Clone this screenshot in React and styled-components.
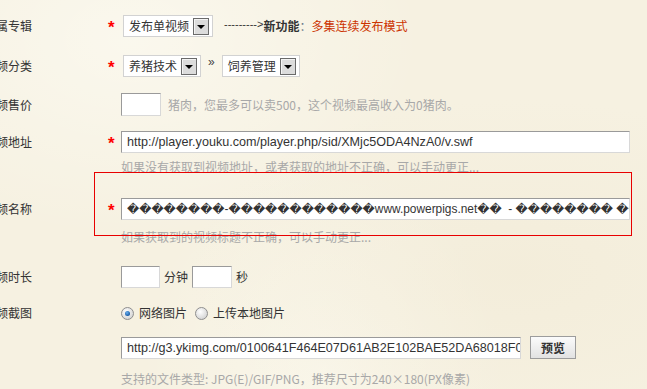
import React from "react";
import styled, { createGlobalStyle } from "styled-components";

const Global = createGlobalStyle`
  html, body { margin: 0; padding: 0; background: #f6f1e1; }
  body { font-family: "Noto Sans CJK SC", "Liberation Sans", sans-serif; }
  * { box-sizing: border-box; }
`;

const Page = styled.div`
  position: relative;
  width: 647px;
  height: 389px;
  overflow: hidden;
  background:
    radial-gradient(ellipse at 20% 10%, rgba(255,255,250,0.5), transparent 40%),
    radial-gradient(ellipse at 80% 70%, rgba(240,232,210,0.45), transparent 45%),
    radial-gradient(ellipse at 50% 95%, rgba(255,255,248,0.4), transparent 40%),
    #f6f1e1;
  color: #333;
  font-size: 12px;
`;

const Form = styled.div`
  display: flex;
  flex-direction: column;
  margin-left: -16px;
  padding-top: 15px;
`;

const Row = styled.div`
  display: grid;
  grid-template-columns: 124px 13px 1fr;
  align-items: center;
  margin-top: ${(p) => p.$top || 0}px;
  min-height: ${(p) => p.$h || 14}px;
`;

const Label = styled.div`
  font-size: 12px;
  line-height: 14px;
  color: #333;
  white-space: nowrap;
`;

const Star = styled.span`
  color: #ff0000;
  font-family: "Liberation Sans", sans-serif;
  font-weight: bold;
  font-size: 17px;
  line-height: 14px;
  padding-top: 3px;
  padding-left: 0;
`;

const Field = styled.div`
  display: flex;
  align-items: center;
  white-space: nowrap;
  line-height: 14px;
`;

const Select = styled.div`
  display: flex;
  align-items: center;
  height: 22px;
  margin-left: ${(p) => p.$ml || 0}px;
  padding: 0 3px 0 5px;
  background: #fff;
  border: 1px solid #d2d2d2;
  font-size: 12px;
  color: #333;
  gap: 4px;
`;

const ArrowBtn = styled.span`
  display: flex;
  align-items: center;
  justify-content: center;
  width: 16px;
  height: 17px;
  border: 1px solid #6a6a6a;
  background: #dcdcdc;
  box-shadow: inset 1px 1px 0 #f4f4f4;
`;

const Tri = styled.span`
  width: 0;
  height: 0;
  border-left: 4px solid transparent;
  border-right: 4px solid transparent;
  border-top: 4px solid #000;
  margin-top: 2px;
`;

const Arrow = styled.span`
  margin-left: 11px;
  font-family: "Liberation Sans", sans-serif;
  font-size: 11px;
  color: #333;
  position: relative;
  top: -2px;
`;

const Strong = styled.span`
  font-weight: bold;
  color: #333;
`;

const Colon = styled.span`
  color: #6a7a8a;
`;

const Red = styled.span`
  color: #cc3300;
`;

const Chevron = styled.span`
  font-family: "Liberation Sans", sans-serif;
  font-size: 12px;
  color: #444;
  margin: 0 7px 0 7px;
  position: relative;
  top: -4px;
`;

const TextInput = styled.input`
  width: ${(p) => p.$w}px;
  height: ${(p) => p.$h || 22}px;
  margin: 0;
  padding: 0 0 0 5px;
  background: #fff;
  border: 1px solid;
  border-color: #9a9a9a #d8d8d8 #d8d8d8 #9a9a9a;
  font-family: "Liberation Sans", "DejaVu Sans", sans-serif;
  font-size: ${(p) => p.$fs || 12.6}px;
  color: #333;
  outline: none;
`;

const Hint = styled.span`
  color: #a8a8a8;
  font-size: 12px;
  margin-left: ${(p) => p.$ml || 0}px;
`;

const Unit = styled.span`
  margin: 0 ${(p) => p.$mr || 4}px 0 4px;
  color: #333;
`;

const Radio = styled.span`
  position: relative;
  width: 13px;
  height: 13px;
  border-radius: 50%;
  border: 1px solid #8e8e8e;
  background: radial-gradient(circle at 40% 35%, #ffffff, #d6d6d6 75%);
  margin-left: ${(p) => p.$ml || 0}px;
  flex: none;
  &::after {
    content: "";
    display: ${(p) => (p.$on ? "block" : "none")};
    position: absolute;
    left: 3px;
    top: 3px;
    width: 5px;
    height: 5px;
    border-radius: 50%;
    background: radial-gradient(circle at 40% 35%, #6ab0f0, #0b4f9c 80%);
  }
`;

const RadioText = styled.span`
  margin-left: 5px;
  color: #333;
`;

const Button = styled.button`
  margin-left: 9px;
  width: 46px;
  height: 23px;
  padding: 0;
  border: 1px solid #9c9c9c;
  background: linear-gradient(#fbfbfb, #e2e2e2);
  font-family: "Noto Sans CJK SC", sans-serif;
  font-size: 12px;
  font-weight: bold;
  color: #333;
`;

const Annotation = styled.div`
  position: absolute;
  left: 94px;
  top: 172px;
  width: 538px;
  height: 64px;
  border: 1px solid #e80000;
  pointer-events: none;
`;

const D = "\uFFFD";
const garbled =
  D.repeat(8) + "-" + D.repeat(12) + "www.powerpigs.net" + D.repeat(2) + "  - " + D.repeat(8) + " " + D.repeat(2);

export default function App() {
  return (
    <Page>
      <Global />
      <Form>
        <Row $h={22}>
          <Label>所属专辑</Label>
          <Star>*</Star>
          <Field>
            <Select $ml={2}>
              发布单视频
              <ArrowBtn><Tri /></ArrowBtn>
            </Select>
            <Arrow>---------&gt;</Arrow>
            <Strong>新功能</Strong>
            <Colon>：</Colon>
            <Red>多集连续发布模式</Red>
          </Field>
        </Row>

        <Row $top={18} $h={22}>
          <Label>视频分类</Label>
          <Star>*</Star>
          <Field>
            <Select $ml={2}>
              养猪技术
              <ArrowBtn><Tri /></ArrowBtn>
            </Select>
            <Chevron>»</Chevron>
            <Select>
              饲养管理
              <ArrowBtn><Tri /></ArrowBtn>
            </Select>
          </Field>
        </Row>

        <Row $top={16} $h={23}>
          <Label>视频售价</Label>
          <span />
          <Field>
            <TextInput $w={40} $h={23} readOnly defaultValue="" />
            <Hint $ml={7}>猪肉，您最多可以卖500，这个视频最高收入为0猪肉。</Hint>
          </Field>
        </Row>

        <Row $top={15} $h={22}>
          <Label>视频地址</Label>
          <Star>*</Star>
          <Field>
            <TextInput $w={509} readOnly defaultValue="http://player.youku.com/player.php/sid/XMjc5ODA4NzA0/v.swf" />
          </Field>
        </Row>
        <Row $top={5}>
          <span />
          <span />
          <Hint>如果没有获取到视频地址，或者获取的地址不正确，可以手动更正...</Hint>
        </Row>

        <Row $top={23} $h={22}>
          <Label>视频名称</Label>
          <Star>*</Star>
          <Field>
            <TextInput $w={509} $fs={11.9} readOnly defaultValue={garbled} />
          </Field>
        </Row>
        <Row $top={8}>
          <span />
          <span />
          <Hint>如果获取到的视频标题不正确，可以手动更正...</Hint>
        </Row>

        <Row $top={21} $h={22}>
          <Label>视频时长</Label>
          <span />
          <Field>
            <TextInput $w={39} readOnly defaultValue="" />
            <Unit>分钟</Unit>
            <TextInput $w={40} readOnly defaultValue="" />
            <Unit $mr={0}>秒</Unit>
          </Field>
        </Row>

        <Row $top={18} $h={14}>
          <Label>视频截图</Label>
          <span />
          <Field>
            <Radio $on />
            <RadioText>网络图片</RadioText>
            <Radio $ml={8} />
            <RadioText>上传本地图片</RadioText>
          </Field>
        </Row>

        <Row $top={16} $h={23}>
          <span />
          <span />
          <Field>
            <TextInput $w={400} readOnly defaultValue="http://g3.ykimg.com/0100641F464E07D61AB2E102BAE52DA68018F0-AB5C" />
            <Button>预览</Button>
          </Field>
        </Row>
        <Row $top={11}>
          <span />
          <span />
          <Hint>支持的文件类型: JPG(E)/GIF/PNG，推荐尺寸为240×180(PX像素)</Hint>
        </Row>
      </Form>
      <Annotation />
    </Page>
  );
}
